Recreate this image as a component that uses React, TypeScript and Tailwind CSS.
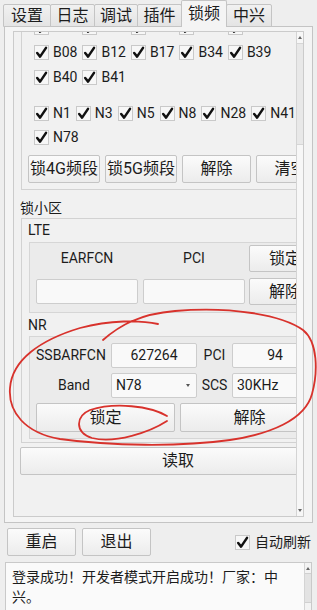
import React from "react";

type BoxProps = { children?: React.ReactNode; className?: string };

function Btn({ children, className = "" }: BoxProps) {
  return (
    <div
      className={`flex shrink-0 items-center justify-center rounded-[2px] border border-[#c4c4c4] bg-linear-to-b from-[#fbfbfb] to-[#ececec] text-[16px] text-[#1c1c1c] ${className}`}
    >
      {children}
    </div>
  );
}

function Field({ children, className = "" }: BoxProps) {
  return (
    <div
      className={`flex h-[25px] shrink-0 items-center rounded-[2px] border border-[#cdcdcd] bg-[#f9f9f9] text-[14px] text-[#1c1c1c] ${className}`}
    >
      {children}
    </div>
  );
}

function Tick() {
  return (
    <span className="flex h-[15px] w-[15px] shrink-0 items-center justify-center border border-[#c9c9c9] bg-[#f7f7f7]">
      <svg width="13" height="13" viewBox="0 0 13 13">
        <path
          d="M2.2 7 L5.1 10.6 L11 1.9"
          fill="none"
          stroke="#111"
          strokeWidth="2.5"
          strokeLinecap="round"
          strokeLinejoin="round"
        />
      </svg>
    </span>
  );
}

function Check({ label }: { label: string }) {
  return (
    <div className="flex shrink-0 items-center gap-[4px]">
      <Tick />
      <span className="text-[14px] text-[#1c1c1c]">{label}</span>
    </div>
  );
}

function CheckRow({ items, h }: { items: string[]; h: string }) {
  return (
    <div className={`flex items-center gap-[5px] ${h}`}>
      {items.map((b) => (
        <Check key={b} label={b} />
      ))}
    </div>
  );
}

const tabs = [
  { name: "设置", w: "w-[48px]" },
  { name: "日志", w: "w-[45px]" },
  { name: "调试", w: "w-[44px]" },
  { name: "插件", w: "w-[45px]" },
  { name: "锁频", w: "w-[46px]", active: true },
  { name: "中兴", w: "w-[46px]" },
];

export default function App() {
  return (
    <div className="relative h-[610px] w-[317px] overflow-hidden bg-[#eeeeee] font-['Roboto','Noto_Sans_CJK_SC',sans-serif] text-[#1c1c1c]">
      {/* Tab bar */}
      <div className="relative z-10 flex h-[27px] items-end pl-[3px]">
        {tabs.map((t) =>
          t.active ? (
            <div
              key={t.name}
              className={`-mr-px flex h-[27px] items-center justify-center rounded-t-[2px] border border-b-0 border-[#c4c4c4] bg-[#f4f4f4] pb-[1px] text-[16px] ${t.w}`}
            >
              {t.name}
            </div>
          ) : (
            <div
              key={t.name}
              className={`-mr-px flex h-[23px] items-center justify-center rounded-t-[2px] border border-[#c4c4c4] bg-linear-to-b from-[#f1f1f1] to-[#e4e4e4] text-[16px] ${t.w}`}
            >
              {t.name}
            </div>
          )
        )}
      </div>

      {/* Tab panel */}
      <div className="-mt-px ml-[4px] h-[497px] w-[309px] border border-[#c4c4c4] bg-[#f4f4f4] pl-[8px] pt-[4px]">
        {/* Scroll area */}
        <div className="flex h-[486px] w-[291px] border border-[#cbcbcb] bg-[#f1f1f1]">
          <div className="h-[484px] w-[282px] overflow-hidden">
            <div className="-mt-[24px] w-[322px]">
              {/* Band group */}
              <div className="ml-[7px] w-[310px] border border-[#d2d2d2] pb-[6px] pt-[6px]">
                <div className="pl-[12px]">
                  <CheckRow h="h-[25px]" items={["B01", "B02", "B03", "B05", "B07"]} />
                  <CheckRow h="h-[25px]" items={["B08", "B12", "B17", "B34", "B39"]} />
                  <CheckRow h="h-[25px]" items={["B40", "B41"]} />
                  <div className="mt-[11px]">
                    <CheckRow h="h-[24px]" items={["N1", "N3", "N5", "N8", "N28", "N41"]} />
                    <CheckRow h="h-[24px]" items={["N78"]} />
                  </div>
                </div>
                <div className="mt-[6px] flex gap-[5px] pl-[6px]">
                  <Btn className="h-[28px] w-[72px]">锁4G频段</Btn>
                  <Btn className="h-[28px] w-[72px]">锁5G频段</Btn>
                  <Btn className="h-[28px] w-[69px]">解除</Btn>
                  <Btn className="h-[28px] w-[69px]">清空</Btn>
                </div>
              </div>

              {/* Lock cell */}
              <div className="mt-[8px] h-[20px] pl-[6px] text-[14px] leading-[20px]">锁小区</div>
              <div className="ml-[7px] w-[310px] border border-[#d2d2d2] pb-[3px] pt-[3px]">
                <div className="h-[16px] pl-[6px] text-[14px] leading-[16px]">LTE</div>
                <div className="ml-[7px] mt-[4px] w-[295px] border border-[#d6d6d6] bg-[#ebebeb] pb-[7px] pl-[6px] pt-[2px]">
                  <div className="flex h-[27px] items-center">
                    <div className="w-[102px] text-center text-[14px]">EARFCN</div>
                    <div className="ml-[5px] w-[102px] text-center text-[14px]">PCI</div>
                    <Btn className="ml-[4px] h-[27px] w-[72px]">锁定</Btn>
                  </div>
                  <div className="mt-[6px] flex h-[27px] items-center">
                    <Field className="h-[24px] w-[102px]" />
                    <Field className="ml-[5px] h-[24px] w-[102px]" />
                    <Btn className="ml-[4px] h-[27px] w-[72px]">解除</Btn>
                  </div>
                </div>

                <div className="mt-[4px] h-[16px] pl-[6px] text-[14px] leading-[16px]">NR</div>
                <div className="ml-[7px] mt-[3px] w-[295px] border border-[#d6d6d6] bg-[#ebebeb] pb-[6px] pl-[6px] pt-[6px]">
                  <div className="flex h-[25px] items-center">
                    <div className="w-[70px] text-center text-[14px]">SSBARFCN</div>
                    <Field className="ml-[5px] w-[86px] justify-center">627264</Field>
                    <div className="w-[35px] text-center text-[14px]">PCI</div>
                    <Field className="w-[86px] justify-center">94</Field>
                  </div>
                  <div className="mt-[5px] flex h-[25px] items-center">
                    <div className="w-[70px] pl-[6px] text-center text-[14px]">Band</div>
                    <Field className="ml-[5px] w-[86px] justify-between pl-[4px] pr-[6px]">
                      <span>N78</span>
                      <span className="mb-[1px] h-0 w-0 border-x-[2.5px] border-t-[3px] border-x-transparent border-t-[#555]" />
                    </Field>
                    <div className="w-[35px] text-center text-[14px]">SCS</div>
                    <Field className="w-[86px] pl-[4px]">30KHz</Field>
                  </div>
                  <div className="mt-[5px] flex gap-[5px]">
                    <Btn className="h-[29px] w-[139px]">锁定</Btn>
                    <Btn className="h-[29px] w-[139px]">解除</Btn>
                  </div>
                </div>
              </div>

              <Btn className="ml-[6px] mt-[4px] h-[28px] w-[316px]">读取</Btn>
            </div>
          </div>

          {/* Scrollbar */}
          <div className="flex h-[484px] w-[7px] flex-col border-l border-[#d4d4d4] bg-[#f7f7f7]">
            <div className="flex h-[11px] items-center justify-center">
              <span className="h-0 w-0 border-x-[2px] border-b-[3px] border-x-transparent border-b-[#666]" />
            </div>
            <div className="h-[102px] border-y border-[#d6d6d6] bg-[#e8e8e8]" />
            <div className="flex-1" />
            <div className="flex h-[11px] items-center justify-center">
              <span className="h-0 w-0 border-x-[2px] border-t-[3px] border-x-transparent border-t-[#666]" />
            </div>
          </div>
        </div>
      </div>

      {/* Bottom controls */}
      <div className="mt-[5px] flex h-[28px] items-center pl-[7px] pr-[6px]">
        <Btn className="h-[28px] w-[69px]">重启</Btn>
        <Btn className="ml-[6px] h-[28px] w-[69px]">退出</Btn>
        <div className="ml-auto flex items-center gap-[5px]">
          <Tick />
          <span className="text-[14px]">自动刷新</span>
        </div>
      </div>

      {/* Log */}
      <div className="ml-[5px] mt-[6px] flex h-[60px] w-[307px] border border-[#c9c9c9] bg-[#fafafa]">
        <div className="w-[284px] pl-[6px] pt-[4px] text-[14px] leading-[20px]">
          <div className="w-[272px]">登录成功！开发者模式开启成功！厂家：中兴。</div>
        </div>
        <div className="ml-auto flex w-[7px] flex-col border-l border-[#d4d4d4] bg-[#f3f3f3]">
          <div className="flex h-[10px] items-center justify-center">
            <span className="h-0 w-0 border-x-[2px] border-b-[3px] border-x-transparent border-b-[#666]" />
          </div>
          <div className="h-[30px] border-y border-[#d0d0d0] bg-[#e3e3e3]" />
        </div>
      </div>

      {/* Red hand-drawn annotation */}
      <svg
        className="pointer-events-none absolute left-0 top-0"
        width="317"
        height="610"
        viewBox="0 0 317 610"
      >
        <path
          d="M103 340 C120 325 140 314 175 311 C230 306 282 315 303 330 C318 342 318 372 312 394 C305 420 270 434 230 440 C180 447 110 446 60 439 C25 433 8 412 10 388 C12 360 40 340 80 328 C110 320 140 320 158 324"
          fill="none"
          stroke="#d8322c"
          strokeWidth="1.8"
          strokeLinecap="round"
        />
        <path
          d="M167 416 C150 406 115 402 90 410 C76 416 74 432 92 438 C115 444 150 432 167 421"
          fill="none"
          stroke="#d8322c"
          strokeWidth="1.8"
          strokeLinecap="round"
        />
      </svg>
    </div>
  );
}
